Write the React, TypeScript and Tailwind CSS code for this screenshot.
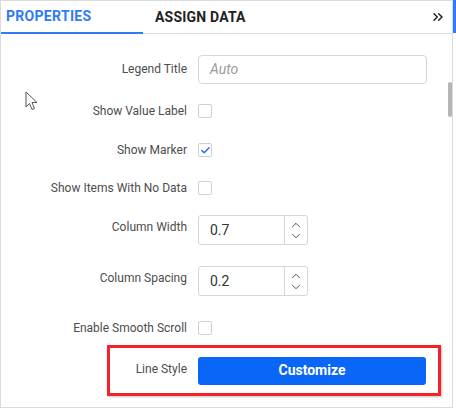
import React from 'react';
import { ChevronsRight, ChevronUp, ChevronDown, Check } from 'lucide-react';

const labelCls = 'w-[186px] shrink-0 text-right text-[12px] text-[#4d4d4d]';

const CheckBox = ({ checked }: { checked?: boolean }) => (
  <div className="ml-[11px] flex h-[14px] w-[14px] items-center justify-center rounded-[2px] border border-[#cfcfcf] bg-white">
    {checked && <Check size={11} strokeWidth={3} className="text-[#1a6cf0]" />}
  </div>
);

const NumberInput = ({ value }: { value: string }) => (
  <div className="ml-[11px] flex h-[30px] w-[110px] rounded-[3px] border border-[#d6d6d6] bg-white">
    <div className="flex flex-1 items-center pl-[11px] text-[14px] text-[#333]">{value}</div>
    <div className="flex w-[23px] flex-col items-center justify-center border-l border-[#d6d6d6] text-[#444]">
      <ChevronUp size={14} strokeWidth={1.6} />
      <ChevronDown size={14} strokeWidth={1.6} className="-mt-[3px]" />
    </div>
  </div>
);

const CheckRow = ({ label, checked, mt }: { label: string; checked?: boolean; mt: string }) => (
  <div className={`flex h-[28px] items-center ${mt}`}>
    <span className={labelCls}>{label}</span>
    <CheckBox checked={checked} />
  </div>
);

export default function App() {
  return (
    <div
      className="relative h-[409px] w-[456px] overflow-hidden bg-white"
      style={{ fontFamily: 'Roboto, "Liberation Sans", sans-serif' }}
    >
      <div className="h-[408px] w-[453px] border border-[#dcdcdc]">
        <div className="flex h-[33px] items-center border-b border-[#dcdcdc]">
          <div className="flex h-full w-[142px] items-center border-b-2 border-[#2e7bf6] pl-[5px] -mb-[1px]">
            <span className="text-[14px] font-bold tracking-[0.3px] text-[#2e7bf6]">PROPERTIES</span>
          </div>
          <span className="ml-[12px] text-[14px] font-bold tracking-[0.2px] text-[#222]">ASSIGN DATA</span>
          <div className="ml-auto mr-[6px] text-[#222]">
            <ChevronsRight size={16} strokeWidth={2.2} />
          </div>
        </div>

        <div className="flex flex-col">
          <div className="mt-[21px] flex h-[28px] items-center">
            <span className={labelCls}>Legend Title</span>
            <div className="ml-[11px] flex h-[29px] w-[229px] items-center rounded-[4px] border border-[#d6d6d6] pl-[11px] text-[14px] italic text-[#9a9a9a]">
              Auto
            </div>
          </div>
          <CheckRow label="Show Value Label" mt="mt-[14px]" />
          <CheckRow label="Show Marker" checked mt="mt-[11px]" />
          <CheckRow label="Show Items With No Data" mt="mt-[10px]" />
          <div className="mt-[13px] flex h-[30px] items-center">
            <span className={`${labelCls} -mt-[6px]`}>Column Width</span>
            <NumberInput value="0.7" />
          </div>
          <div className="mt-[21px] flex h-[30px] items-center">
            <span className={`${labelCls} -mt-[6px]`}>Column Spacing</span>
            <NumberInput value="0.2" />
          </div>
          <CheckRow label="Enable Smooth Scroll" mt="mt-[18px]" />
          <div className="mt-[3px] ml-[106px] flex h-[51px] w-[334px] items-center border-[3px] border-[#f5222a] shadow-[1px_1px_2px_rgba(0,0,0,0.25)]">
            <span className="w-[77px] shrink-0 text-right text-[12px] text-[#4d4d4d] -mt-[3px]">Line Style</span>
            <button className="ml-[11px] flex h-[28px] w-[228px] items-center justify-center rounded-[3px] bg-[#0a66f7] text-[14px] font-bold text-white">
              Customize
            </button>
          </div>
        </div>
      </div>

      <div className="absolute right-0 top-0 h-[33px] w-[3px] bg-[#2e7bf6]" />
      <div className="absolute left-[448px] top-[82px] h-[35px] w-[4px] rounded-full bg-[#b5b5b5]" />

      <svg className="absolute left-[25px] top-[91px]" width="14" height="21" viewBox="0 0 14 21">
        <path d="M1 1 L1 16 L4.5 12.5 L7 18.5 L9.5 17.5 L7 11.5 L12 11.5 Z" fill="white" stroke="#555" strokeWidth="1" strokeLinejoin="round" />
      </svg>
    </div>
  );
}
